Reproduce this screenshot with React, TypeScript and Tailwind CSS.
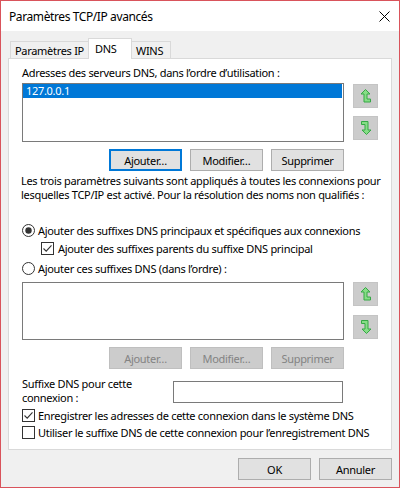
import type { ReactNode } from "react"

function ArrowUp() {
    return (
        <svg width="12" height="16" viewBox="0 0 12 16">
            <path d="M5.5 1.5 L10 6 H7 V11 H10.5 V14 H4 V6 H1 Z" fill="#86dd86" stroke="#35a845" strokeWidth="1" strokeLinejoin="round" />
        </svg>
    )
}

function ArrowDown() {
    return (
        <svg width="12" height="16" viewBox="0 0 12 16">
            <path d="M1.5 1.5 H8 V10 H11 L6.5 14.5 L2 10 H5 V4.5 H1.5 Z" fill="#86dd86" stroke="#35a845" strokeWidth="1" strokeLinejoin="round" />
        </svg>
    )
}

function MoveButtons({ gap }: { gap: string }) {
    return (
        <div className={`ml-[9px] flex flex-col ${gap}`}>
            <div className="w-[25px] h-[24px] bg-[#cccccc] border border-[#c4c4c4] flex items-center justify-center">
                <ArrowUp />
            </div>
            <div className="w-[25px] h-[24px] bg-[#cccccc] border border-[#c4c4c4] flex items-center justify-center">
                <ArrowDown />
            </div>
        </div>
    )
}

function Radio({ checked }: { checked?: boolean }) {
    return (
        <svg width="13" height="13" viewBox="0 0 13 13" className="shrink-0">
            <circle cx="6.5" cy="6.5" r="6" fill="#fff" stroke="#333" strokeWidth="1" />
            {checked ? <circle cx="6.5" cy="6.5" r="3.2" fill="#333" /> : null}
        </svg>
    )
}

function Checkbox({ checked }: { checked?: boolean }) {
    return (
        <svg width="13" height="13" viewBox="0 0 13 13" className="shrink-0">
            <rect x="0.5" y="0.5" width="12" height="12" fill="#fff" stroke="#333" strokeWidth="1" />
            {checked ? <polyline points="2.5,6.5 5.2,9.2 10.5,3.3" fill="none" stroke="#333" strokeWidth="1.1" /> : null}
        </svg>
    )
}

function Btn({ children, focused }: { children: ReactNode; focused?: boolean }) {
    if (focused) {
        return (
            <div className="w-[73px] h-[22px] bg-[#e1e1e1] border-2 border-[#0078d7] flex items-center justify-center">
                {children}
            </div>
        )
    }
    return (
        <div className="w-[73px] h-[22px] bg-[#e1e1e1] border border-[#adadad] flex items-center justify-center">
            {children}
        </div>
    )
}

function DisabledBtn({ children }: { children: ReactNode }) {
    return (
        <div className="w-[73px] h-[22px] bg-[#cccccc] border border-[#bfbfbf] text-[#838383] flex items-center justify-center">
            {children}
        </div>
    )
}

export default function App() {
    return (
        <div className="w-[400px] h-[488px] border border-[#d9535b] bg-[#f0f0f0] flex flex-col overflow-hidden font-['Noto_Sans',sans-serif] text-[11px] leading-[15px] tracking-[-0.3px] text-black">
            {/* title bar */}
            <div className="h-[30px] shrink-0 bg-white flex items-center justify-between pl-[8px] pr-[9px]">
                <span className="text-[12px] tracking-[-0.4px]">Paramètres TCP/IP avancés</span>
                <svg width="11" height="11" viewBox="0 0 11 11">
                    <path d="M0.5 0.5 L10.5 10.5 M10.5 0.5 L0.5 10.5" stroke="#000" strokeWidth="1" />
                </svg>
            </div>

            <div className="flex flex-col px-[7px]">
                {/* tabs */}
                <div className="flex items-end h-[20px] mt-[7px] pl-[2px]">
                    <div className="h-[17px] w-[78px] border border-r-0 border-b-0 border-[#d9d9d9] bg-[#f0f0f0] pl-[4px] flex items-center">
                        Paramètres IP
                    </div>
                    <div className="relative z-10 h-[21px] w-[44px] -mb-[1px] border border-b-0 border-[#d9d9d9] bg-white pl-[6px] pt-[2px]">
                        DNS
                    </div>
                    <div className="h-[17px] w-[39px] border border-l-0 border-b-0 border-[#d9d9d9] bg-[#f0f0f0] pl-[4px] flex items-center">
                        WINS
                    </div>
                </div>

                {/* panel */}
                <div className="h-[392px] border border-[#d9d9d9] bg-white pl-[13px] flex flex-col">
                    <div className="mt-[6px]">Adresses des serveurs DNS, dans l’ordre d’utilisation :</div>

                    <div className="mt-[3px] flex">
                        <div className="w-[322px] h-[59px] border border-[#7a7a7a] bg-white">
                            <div className="h-[14px] leading-[14px] mr-[1px] bg-[#0078d7] text-white pl-[3px]">127.0.0.1</div>
                        </div>
                        <div className="pt-[1px]">
                            <MoveButtons gap="gap-[8px]" />
                        </div>
                    </div>

                    <div className="mt-[7px] w-[322px] flex justify-end gap-[8px]">
                        <Btn focused>Ajouter…</Btn>
                        <Btn>Modifier…</Btn>
                        <Btn>Supprimer</Btn>
                    </div>

                    <p className="mt-[3px] -ml-[1px] leading-[14px] whitespace-nowrap">
                        Les trois paramètres suivants sont appliqués à toutes les connexions pour
                        <br />
                        lesquelles TCP/IP est activé. Pour la résolution des noms non qualifiés :
                    </p>

                    <div className="mt-[20px] h-[16px] flex items-center gap-[3px]">
                        <Radio checked />
                        <span>Ajouter des suffixes DNS principaux et spécifiques aux connexions</span>
                    </div>
                    <div className="mt-[2px] h-[16px] ml-[19px] flex items-center gap-[4px]">
                        <Checkbox checked />
                        <span>Ajouter des suffixes parents du suffixe DNS principal</span>
                    </div>
                    <div className="mt-[4px] h-[16px] flex items-center gap-[3px]">
                        <Radio />
                        <span>Ajouter ces suffixes DNS (dans l’ordre) :</span>
                    </div>

                    <div className="mt-[6px] flex">
                        <div className="w-[322px] h-[58px] border border-[#7a7a7a] bg-white" />
                        <MoveButtons gap="gap-[9px]" />
                    </div>

                    <div className="mt-[7px] w-[322px] flex justify-end gap-[8px]">
                        <DisabledBtn>Ajouter…</DisabledBtn>
                        <DisabledBtn>Modifier…</DisabledBtn>
                        <DisabledBtn>Supprimer</DisabledBtn>
                    </div>

                    <div className="mt-[8px] flex items-start">
                        <div className="w-[151px] leading-[14px]">
                            Suffixe DNS pour cette
                            <br />
                            connexion :
                        </div>
                        <div className="mt-[4px] w-[170px] h-[22px] border border-[#7a7a7a] bg-white" />
                    </div>

                    <div className="mt-[2px] h-[17px] flex items-center gap-[3px]">
                        <Checkbox checked />
                        <span>Enregistrer les adresses de cette connexion dans le système DNS</span>
                    </div>
                    <div className="h-[17px] flex items-center gap-[3px]">
                        <Checkbox />
                        <span>Utiliser le suffixe DNS de cette connexion pour l’enregistrement DNS</span>
                    </div>
                </div>

                {/* dialog buttons */}
                <div className="mt-[8px] flex justify-end gap-[8px]">
                    <Btn>OK</Btn>
                    <Btn>Annuler</Btn>
                </div>
            </div>
        </div>
    )
}
